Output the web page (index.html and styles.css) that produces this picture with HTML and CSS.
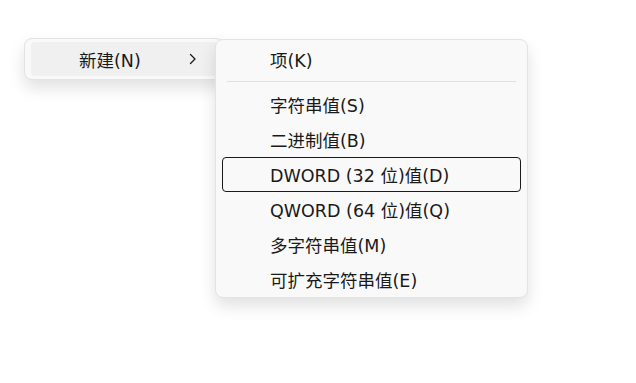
FILE: index.html
```html
<!DOCTYPE html>
<html lang="zh-CN">
<head>
  <meta charset="UTF-8" />
  <title>新建</title>
  <link rel="stylesheet" href="styles.css">
</head>
<body>
  <div class="menu parent-menu">
    <div class="menu-item open">
      <span class="label">新建(N)</span>
      <svg class="chevron" width="8" height="12" viewBox="0 0 8 12">
        <path d="M1.5 1.5 L6 6 L1.5 10.5" fill="none" stroke="#1a1a1a" stroke-width="1.3" stroke-linecap="round" stroke-linejoin="round"/>
      </svg>
    </div>
  </div>

  <div class="menu sub-menu">
    <div class="menu-item">项(K)</div>
    <div class="separator"></div>
    <div class="menu-item">字符串值(S)</div>
    <div class="menu-item">二进制值(B)</div>
    <div class="menu-item focused">DWORD (32 位)值(D)</div>
    <div class="menu-item">QWORD (64 位)值(Q)</div>
    <div class="menu-item">多字符串值(M)</div>
    <div class="menu-item">可扩充字符串值(E)</div>
  </div>
</body>
</html>
```

FILE: styles.css
```css
body {
  margin: 0;
  background-color: #fff;
  font-family: "DejaVu Sans", "Noto Sans CJK SC", sans-serif;
  font-size: 17.5px;
  color: #1a1a1a;
}
.menu {
  position: absolute;
  background-color: #f9f9f9;
  border: 1px solid #e3e3e3;
  border-radius: 8px;
  box-sizing: border-box;
  box-shadow: 0 8px 16px rgba(0, 0, 0, 0.12);
}
.parent-menu {
  left: 24px;
  top: 38px;
  width: 200px;
  height: 42px;
  padding: 3px 6px;
}
.parent-menu .menu-item {
  height: 34px;
  background-color: #f0f0f0;
  border-radius: 4px;
  display: flex;
  align-items: center;
  padding-left: 48px;
  padding-right: 16px;
}
.parent-menu .label {
  flex: 1;
}
.chevron {
  margin-right: 4px;
}
.sub-menu {
  left: 215px;
  top: 39px;
  width: 313px;
  height: 259px;
  padding: 2px 6px;
}
.sub-menu .menu-item {
  height: 35px;
  box-sizing: border-box;
  display: flex;
  align-items: center;
  padding-left: 47px;
  border: 1px solid transparent;
  border-radius: 4px;
  white-space: nowrap;
}
.sub-menu .menu-item.focused {
  border-color: #1a1a1a;
}
.separator {
  height: 1px;
  background-color: #e0e0e0;
  margin: 4px 5px 5px;
}
```
